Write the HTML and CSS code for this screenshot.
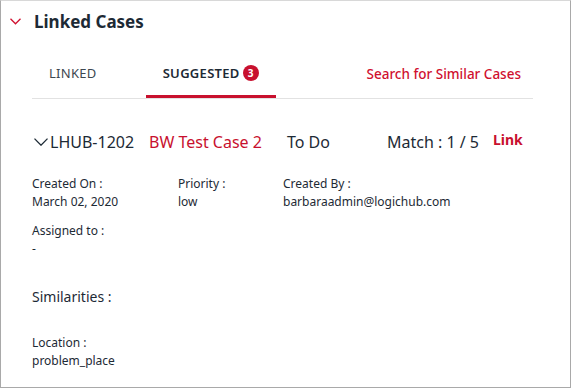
FILE: index.html
```html
<!DOCTYPE html>
<html lang="en">
<head>
  <meta charset="UTF-8" />
  <title>Linked Cases</title>
  <link rel="stylesheet" href="styles.css">
</head>
<body>
  <div class="panel">
    <div class="panel-head">
      <svg class="toggle" width="11" height="7" viewBox="0 0 11 7"><polyline points="0.5,0.8 5.5,5.8 10.5,0.8" fill="none" stroke="#d0102f" stroke-width="1.3"/></svg>
      <h2>Linked Cases</h2>
    </div>

    <div class="tabs">
      <div class="tab">LINKED</div>
      <div class="tab active">SUGGESTED<span class="badge">3</span></div>
      <a class="search" href="#">Search for Similar Cases</a>
    </div>

    <div class="case">
      <div class="case-row">
        <div class="case-id">
          <svg width="14" height="8" viewBox="0 0 14 8"><polyline points="0.5,0.6 7,7.2 13.5,0.6" fill="none" stroke="#1d2a35" stroke-width="1.3"/></svg>
          LHUB-1202
        </div>
        <div class="case-title">BW Test Case 2</div>
        <div>To Do</div>
        <div>Match : 1 / 5</div>
        <a class="link" href="#">Link</a>
      </div>

      <div class="fields">
        <div class="field">
          <div class="label">Created On :</div>
          <div class="value">March 02, 2020</div>
        </div>
        <div class="field">
          <div class="label">Priority :</div>
          <div class="value">low</div>
        </div>
        <div class="field">
          <div class="label">Created By :</div>
          <div class="value">barbaraadmin@logichub.com</div>
        </div>
        <div class="field">
          <div class="label">Assigned to :</div>
          <div class="value">-</div>
        </div>
      </div>

      <div class="similar">Similarities :</div>

      <div class="field">
        <div class="label">Location :</div>
        <div class="value">problem_place</div>
      </div>
    </div>
  </div>
</body>
</html>
```

FILE: styles.css
```css
body {
  margin: 0;
  font-family: "Noto Sans", "Open Sans", sans-serif;
  color: #1d2a35;
  background: #fff;
}
.panel {
  width: 571px;
  height: 388px;
  box-sizing: border-box;
  border: 1px solid #a9a9a9;
  border-top-color: #d8d8d8;
}
.panel-head {
  display: flex;
  align-items: center;
  height: 40px;
  padding-left: 9px;
}
.toggle {
  margin-right: 13px;
}
.panel-head h2 {
  margin: 0;
  font-size: 17px;
  font-weight: bold;
  color: #1d2a35;
}
.tabs {
  display: flex;
  align-items: center;
  margin: 14px 37px 0 31px;
  height: 43px;
  border-bottom: 1px solid #e2e2e2;
}
.tab {
  display: flex;
  align-items: center;
  box-sizing: border-box;
  height: 43px;
  padding: 0 17px 4px;
  font-size: 13px;
  letter-spacing: 0.3px;
  color: #3d4750;
  border-bottom: 3px solid transparent;
}
.tab + .tab {
  margin-left: 32px;
}
.tab.active {
  color: #1d2a35;
  font-weight: 600;
  border-bottom-color: #c8102e;
}
.badge {
  display: inline-flex;
  align-items: center;
  justify-content: center;
  width: 16px;
  height: 16px;
  margin-left: 3px;
  border-radius: 50%;
  background: #c8102e;
  color: #fff;
  font-size: 10px;
  font-weight: bold;
  letter-spacing: 0;
}
.search {
  margin-left: auto;
  margin-right: 12px;
  padding-bottom: 6px;
  font-size: 13.5px;
  font-weight: 500;
  color: #d0102f;
  text-decoration: none;
}
.case {
  padding: 0 0 0 31px;
}
.case-row {
  display: grid;
  grid-template-columns: 117px 138px 100px 106px auto;
  align-items: center;
  margin-top: 31px;
  font-size: 16px;
  height: 24px;
}
.case-id {
  display: flex;
  align-items: center;
  gap: 2px;
}
.case-id svg {
  margin-left: 2px;
}
.case-title {
  color: #c8102e;
}
.link {
  font-size: 14px;
  font-weight: bold;
  color: #c8102e;
  text-decoration: none;
  margin-top: -6px;
}
.fields {
  display: grid;
  grid-template-columns: 146px 105px auto;
  row-gap: 11px;
  margin-top: 21px;
}
.label,
.value {
  font-size: 12px;
  line-height: 18px;
}
.similar {
  margin-top: 29px;
  font-size: 14px;
}
.similar + .field {
  margin-top: 28px;
}
```
